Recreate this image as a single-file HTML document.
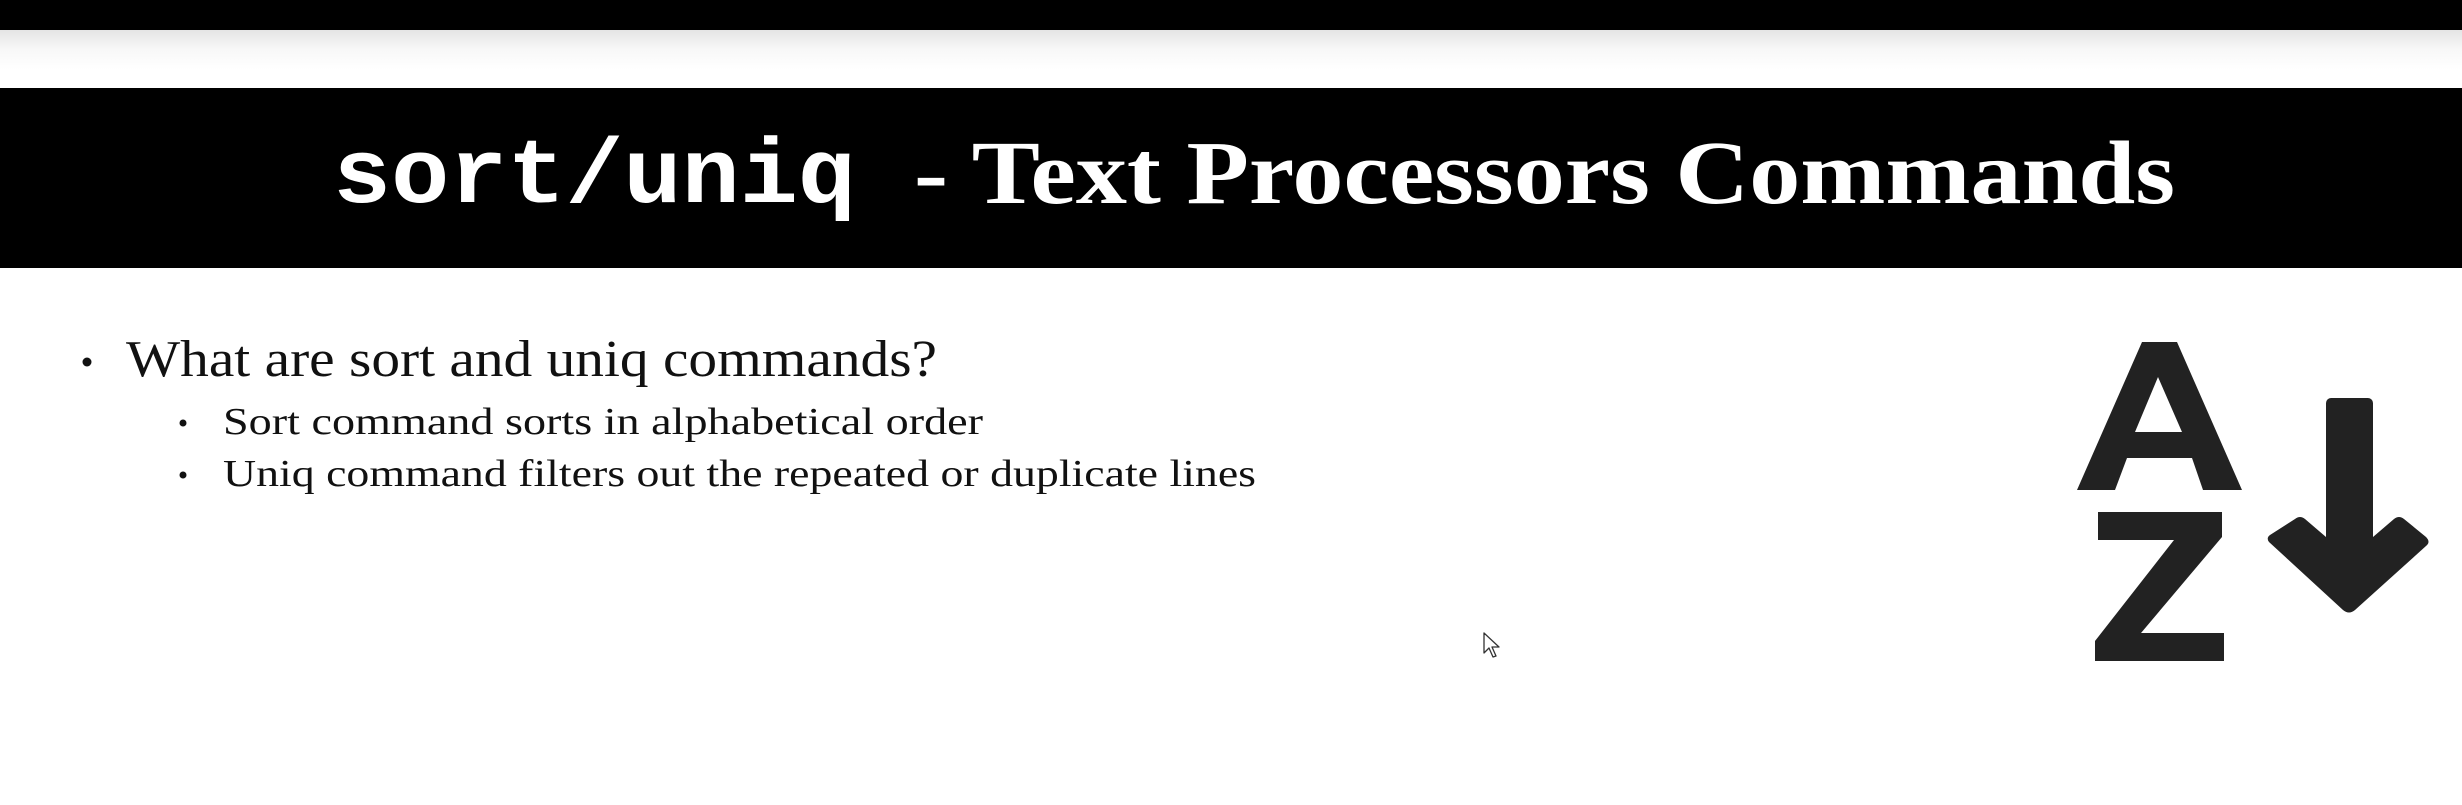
<!DOCTYPE html>
<html><head><meta charset="utf-8"><style>
html,body{margin:0;padding:0;background:#fff;width:2462px;height:805px;overflow:hidden}
svg{display:block}
</style></head><body>
<svg width="2462" height="805" viewBox="0 0 2462 805" xmlns="http://www.w3.org/2000/svg">
<defs>
<linearGradient id="g" x1="0" y1="0" x2="0" y2="1">
<stop offset="0" stop-color="#e4e4e4"/><stop offset="0.5" stop-color="#f8f8f8"/><stop offset="1" stop-color="#ffffff"/>
</linearGradient>
</defs>
<rect x="0" y="0" width="2462" height="805" fill="#fff"/>
<rect x="0" y="0" width="2462" height="30" fill="#000"/>
<rect x="0" y="30" width="2462" height="40" fill="url(#g)"/>
<rect x="0" y="88" width="2462" height="180" fill="#000"/>
<text x="333" y="202" fill="#fff" font-family="'Liberation Mono',monospace" font-weight="bold" font-size="92" textLength="523" lengthAdjust="spacingAndGlyphs">sort/uniq</text>
<text x="914" y="203" fill="#fff" font-family="'Liberation Serif',serif" font-weight="bold" font-size="90" textLength="1261" lengthAdjust="spacingAndGlyphs">- Text Processors Commands</text>

<circle cx="87" cy="362" r="4.5" fill="#111"/>
<text x="126" y="376" fill="#111" font-family="'Liberation Serif',serif" font-size="52" textLength="811" lengthAdjust="spacingAndGlyphs">What are sort and uniq commands?</text>
<circle cx="183" cy="423" r="3.5" fill="#111"/>
<text x="223" y="434" fill="#111" font-family="'Liberation Serif',serif" font-size="38" textLength="760" lengthAdjust="spacingAndGlyphs">Sort command sorts in alphabetical order</text>
<circle cx="183" cy="475" r="3.5" fill="#111"/>
<text x="223" y="486" fill="#111" font-family="'Liberation Serif',serif" font-size="38" textLength="1033" lengthAdjust="spacingAndGlyphs">Uniq command filters out the repeated or duplicate lines</text>

<g fill="#222">
<path fill-rule="evenodd" d="M2142 342 L2177 342 L2242 490 L2203 490 L2192 458 L2127 458 L2115 490 L2077 490 Z M2158 377 L2135 432 L2182 432 Z"/>
<path d="M2098 512 L2222 512 L2222 537 L2141 633 L2224 633 L2224 661 L2095 661 L2095 641 L2174 540 L2098 540 Z"/>
<rect x="2326" y="398" width="47" height="170" rx="5"/>
<path d="M2269 542 Q2266 538 2270 535 L2295 519 Q2300 515 2305 519 L2326 537 L2373 537 L2394 519 Q2399 515 2404 519 L2426 537 Q2431 542 2426 546 L2355 610 Q2349 615 2343 610 Z"/>
</g>

<path d="M1484 633 L1484 653 L1489 648 L1493 657 L1496 656 L1492 647 L1499 647 Z" fill="#fff" stroke="#333" stroke-width="1.3" stroke-linejoin="round"/>
</svg>
</body></html>
